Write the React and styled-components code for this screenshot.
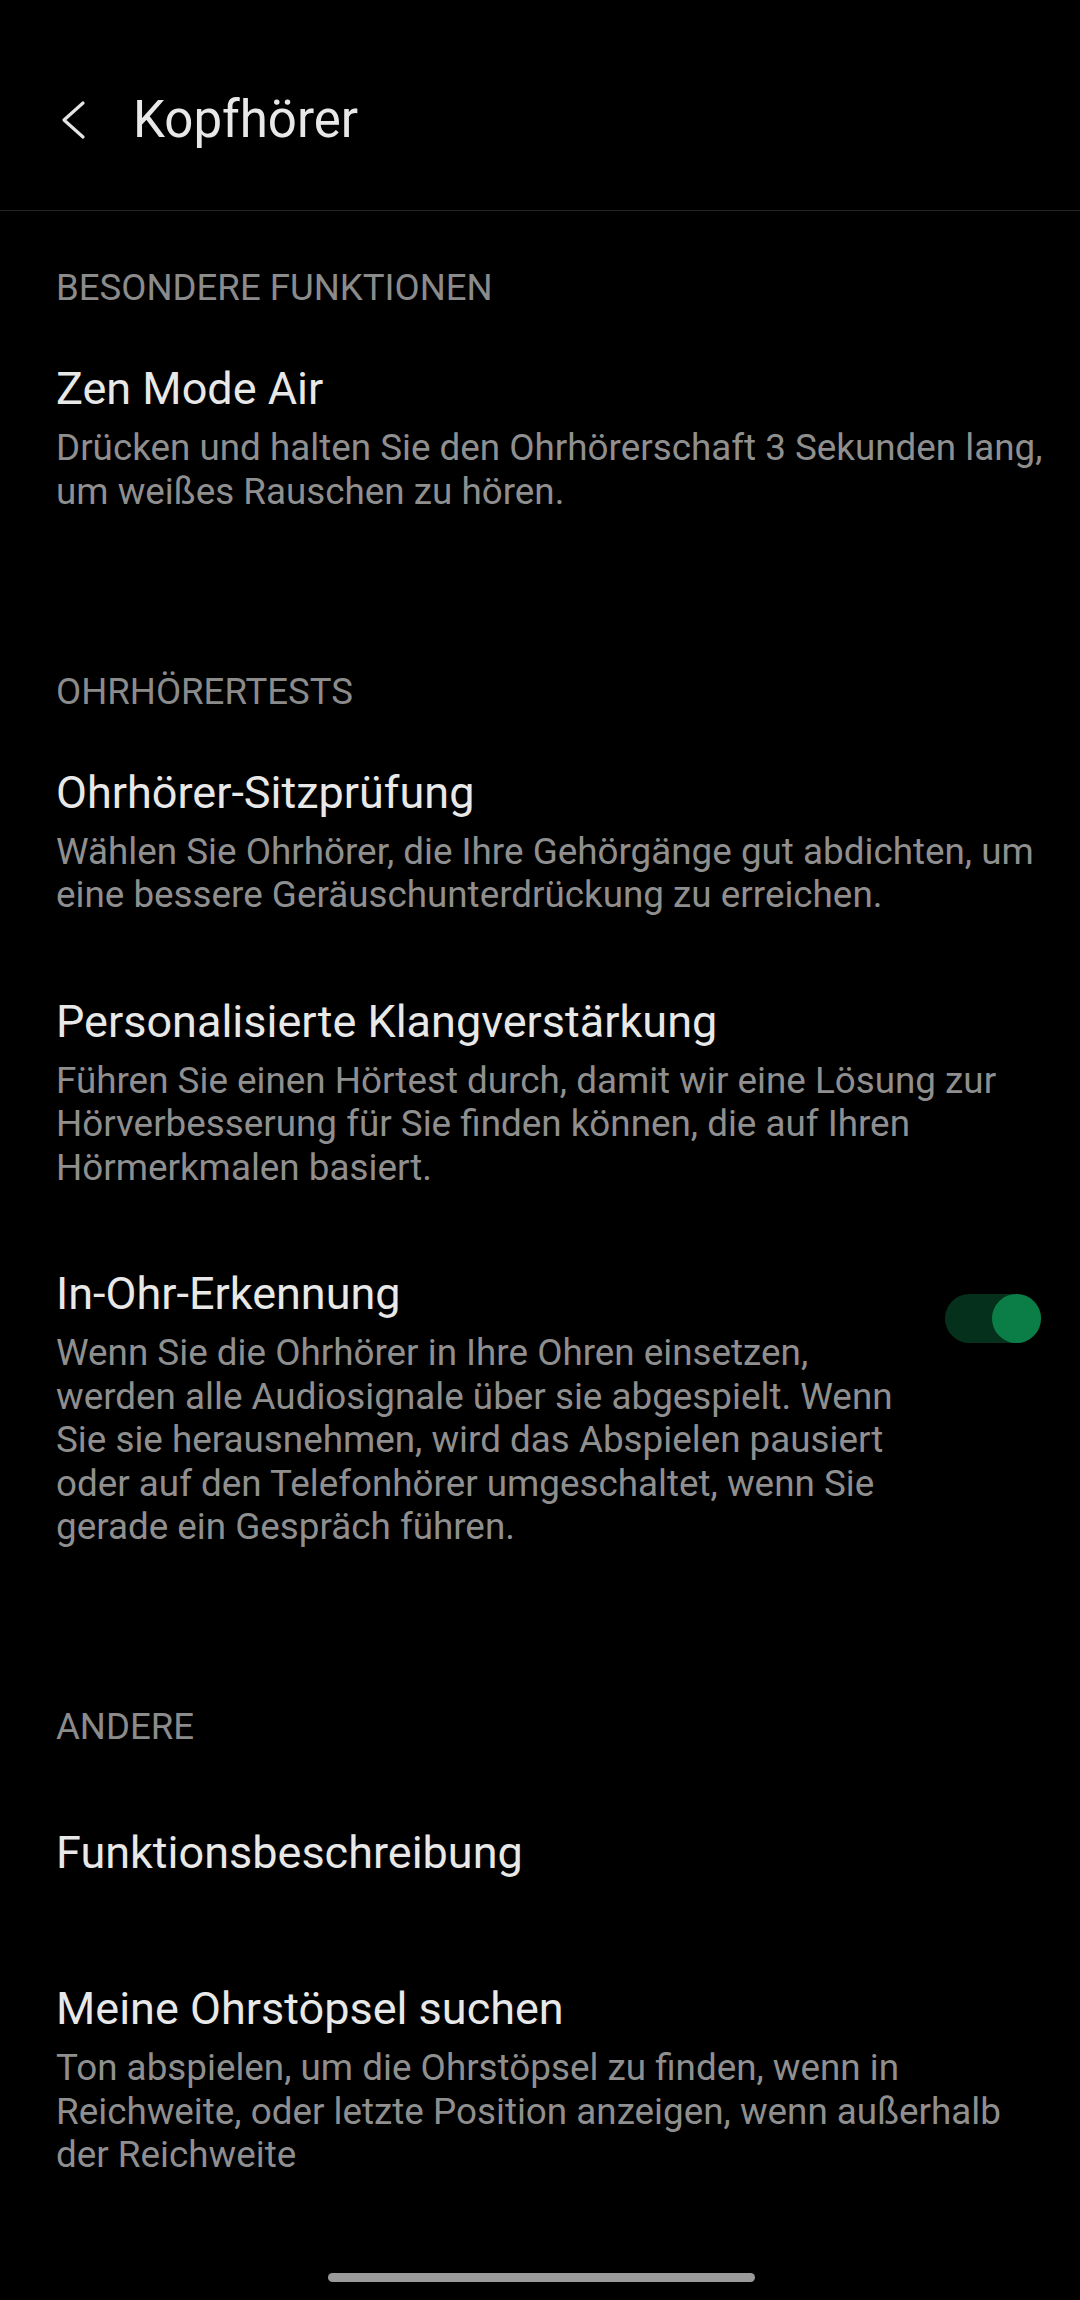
import React from "react";
import styled, { createGlobalStyle } from "styled-components";

const GlobalStyle = createGlobalStyle`
  html, body {
    margin: 0;
    padding: 0;
    background: #000;
  }
  * { box-sizing: border-box; }
`;

const Page = styled.div`
  min-height: 2300px;
  background: #000;
  display: flex;
  flex-direction: column;
  font-family: Roboto, "Noto Sans", "Liberation Sans", sans-serif;
  color: #e8e8e8;
`;

const Header = styled.header`
  height: 211px;
  padding: 90px 0 0 60px;
  display: flex;
  align-items: flex-start;
  border-bottom: 1px solid #262626;
`;

const BackButton = styled.button`
  width: 73px;
  height: 60px;
  padding: 0;
  border: 0;
  background: transparent;
  display: flex;
  align-items: center;
  justify-content: flex-start;
  color: #e4e4e4;
`;

const HeaderTitle = styled.h1`
  margin: 0;
  font-size: 51px;
  line-height: 60px;
  font-weight: 400;
  color: #e8e8e8;
`;

const Content = styled.main`
  display: flex;
  flex-direction: column;
  padding: 0 26px 0 56px;
`;

const SectionHeader = styled.div`
  padding-top: ${(p) => (p.$first ? 55 : 117)}px;
  padding-bottom: 13.5px;
  font-size: 36.6px;
  line-height: 44px;
  color: #8b8b8b;
  text-transform: uppercase;
`;

const Item = styled.div`
  display: flex;
  align-items: flex-start;
  gap: 30px;
  padding: ${(p) => (p.$single ? 64.5 : 39.5)}px 0;
`;

const ItemText = styled.div`
  flex: 1;
  display: flex;
  flex-direction: column;
  gap: 11px;
`;

const ItemTitle = styled.div`
  font-size: 45px;
  line-height: 52px;
  color: #e8e8e8;
`;

const ItemSummary = styled.div`
  font-size: 36.8px;
  line-height: 43.5px;
  color: #8f8f8f;
  white-space: pre-line;
`;

const Track = styled.div`
  flex: none;
  margin-top: 26px;
  margin-right: 13px;
  width: 96px;
  height: 49px;
  border-radius: 25px;
  background: #05301b;
  display: flex;
  justify-content: ${(p) => (p.$on ? "flex-end" : "flex-start")};
`;

const Thumb = styled.div`
  width: 49px;
  height: 49px;
  border-radius: 50%;
  background: #0b7e47;
`;

const Footer = styled.div`
  margin-top: auto;
  display: flex;
  justify-content: center;
  padding-bottom: 18px;
`;

const HomeBar = styled.div`
  width: 427px;
  height: 9px;
  border-radius: 5px;
  background: #9a9a9a;
  margin-left: 3px;
`;

const Chevron = () => (
  <svg width="26" height="40" viewBox="0 0 26 40" fill="none">
    <polyline
      points="23,3 4,20 23,37"
      stroke="currentColor"
      strokeWidth="3.2"
      strokeLinecap="round"
      strokeLinejoin="round"
    />
  </svg>
);

const Setting = ({ title, summary, toggle }) => (
  <Item $single={!summary}>
    <ItemText>
      <ItemTitle>{title}</ItemTitle>
      {summary && <ItemSummary>{summary}</ItemSummary>}
    </ItemText>
    {toggle !== undefined && (
      <Track $on={toggle}>
        <Thumb />
      </Track>
    )}
  </Item>
);

export default function App() {
  return (
    <Page>
      <GlobalStyle />
      <Header>
        <BackButton aria-label="Zurück">
          <Chevron />
        </BackButton>
        <HeaderTitle>Kopfhörer</HeaderTitle>
      </Header>
      <Content>
        <SectionHeader $first>Besondere Funktionen</SectionHeader>
        <Setting
          title="Zen Mode Air"
          summary={"Drücken und halten Sie den Ohrhörerschaft 3 Sekunden lang,\num weißes Rauschen zu hören."}
        />

        <SectionHeader>Ohrhörertests</SectionHeader>
        <Setting
          title="Ohrhörer-Sitzprüfung"
          summary={"Wählen Sie Ohrhörer, die Ihre Gehörgänge gut abdichten, um\neine bessere Geräuschunterdrückung zu erreichen."}
        />
        <Setting
          title="Personalisierte Klangverstärkung"
          summary={"Führen Sie einen Hörtest durch, damit wir eine Lösung zur\nHörverbesserung für Sie finden können, die auf Ihren\nHörmerkmalen basiert."}
        />
        <Setting
          title="In-Ohr-Erkennung"
          toggle={true}
          summary={"Wenn Sie die Ohrhörer in Ihre Ohren einsetzen,\nwerden alle Audiosignale über sie abgespielt. Wenn\nSie sie herausnehmen, wird das Abspielen pausiert\noder auf den Telefonhörer umgeschaltet, wenn Sie\ngerade ein Gespräch führen."}
        />

        <SectionHeader>Andere</SectionHeader>
        <Setting title="Funktionsbeschreibung" />
        <Setting
          title="Meine Ohrstöpsel suchen"
          summary={"Ton abspielen, um die Ohrstöpsel zu finden, wenn in\nReichweite, oder letzte Position anzeigen, wenn außerhalb\nder Reichweite"}
        />
      </Content>
      <Footer>
        <HomeBar />
      </Footer>
    </Page>
  );
}
